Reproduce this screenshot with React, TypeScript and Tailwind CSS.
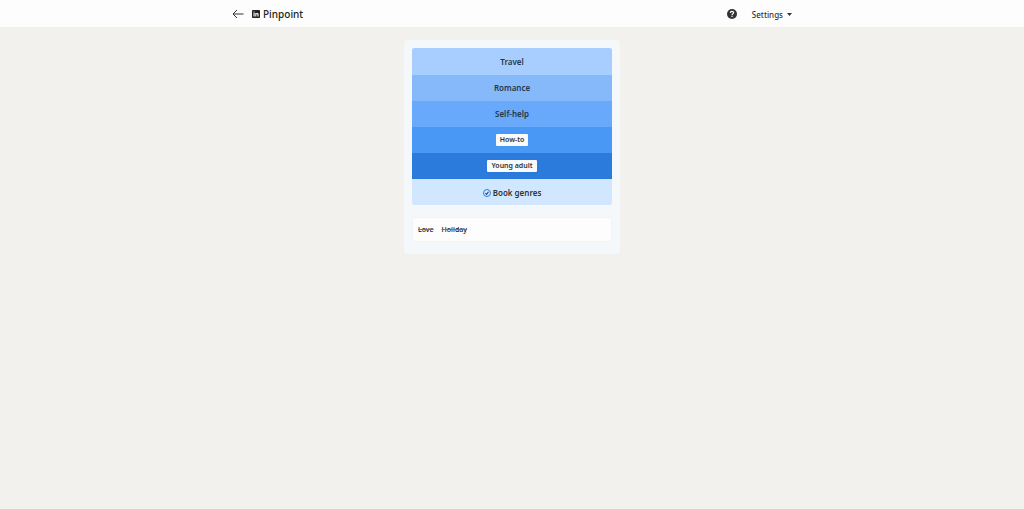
import React from "react";

const clues = [
  { text: "Travel", row: "h-[27px] bg-[#a8ceff]", boxed: false },
  { text: "Romance", row: "h-[26px] bg-[#86b9f9]", boxed: false },
  { text: "Self-help", row: "h-[26px] bg-[#69a9fb]", boxed: false },
  { text: "How-to", row: "h-[26px] bg-[#4a98f6]", boxed: true },
  { text: "Young adult", row: "h-[26px] bg-[#2b7bdd]", boxed: true },
];

const guesses = ["Love", "Holiday"];

const Header = () => {
  return (
    <header className="border-b border-[#f0f0ee] bg-[#fdfdfd]">
      <div className="mx-auto flex h-[27px] max-w-[560px] items-center justify-between">
        <div className="flex items-center gap-2">
          <button aria-label="Back" className="text-[#333]">
            <svg width="12" height="10" viewBox="0 0 12 10" fill="none" stroke="currentColor">
              <path d="M11.5 5H1M5 1 1 5l4 4" />
            </svg>
          </button>
          <h1 className="flex items-center gap-[3px] text-[10px] leading-4 font-medium text-[#222]">
            <svg width="8" height="8" viewBox="0 0 16 16" aria-hidden="true">
              <rect width="16" height="16" rx="1.5" fill="#222" />
              <path
                d="M3 6h2.2v7H3zM3 2.8h2.2V5H3zM6.6 6h2.1v1c.5-.8 1.2-1.2 2.1-1.2 1.6 0 2.4 1 2.4 3V13H11V9.3c0-1-.4-1.5-1.1-1.5s-1.2.5-1.2 1.5V13H6.6z"
                fill="#fff"
              />
            </svg>
            Pinpoint
          </h1>
        </div>
        <div className="flex items-center gap-[15px]">
          <button aria-label="Help">
            <svg width="10" height="10" viewBox="0 0 20 20">
              <circle cx="10" cy="10" r="10" fill="#333" />
              <path
                d="M6.8 7.8c0-2 1.3-3.2 3.2-3.2s3.2 1.1 3.2 2.8c0 2.3-3.1 2.4-3.1 4.7"
                fill="none"
                stroke="#fff"
                strokeWidth="2.5"
              />
              <circle cx="10" cy="14.7" r="1.5" fill="#fff" />
            </svg>
          </button>
          <button className="flex items-center gap-1 pt-[2px] text-[8px] leading-4 font-medium text-[#333]">
            Settings
            <svg width="5" height="3" viewBox="0 0 5 3" aria-hidden="true">
              <path d="M0 0h5L2.5 3z" fill="currentColor" />
            </svg>
          </button>
        </div>
      </div>
    </header>
  );
};

const App = () => {
  return (
    <div className="min-h-screen bg-[#f2f1ed] font-['Noto_Sans',sans-serif]">
      <Header />
      <main className="px-2 py-3">
        <section className="mx-auto max-w-[216px] rounded bg-[#f4f8fb] px-2 pt-2 pb-3">
          <ul className="overflow-hidden rounded-xs text-center text-[8px] leading-4 font-semibold text-[#26384d]">
            {clues.map((clue) => (
              <li
                key={clue.text}
                className={`flex items-center justify-center ${clue.row}`}
              >
                {clue.boxed ? (
                  <span className="rounded-[1px] bg-[#f8fafc] px-1 text-[7px] leading-3 text-[#333]">
                    {clue.text}
                  </span>
                ) : (
                  clue.text
                )}
              </li>
            ))}
            <li className="flex h-[26px] items-center justify-center gap-[2px] bg-[#d0e7ff] pt-[2px] text-[#333]">
              <svg width="8" height="8" viewBox="0 0 16 16" fill="none" aria-hidden="true">
                <circle cx="8" cy="8" r="7" stroke="#2f7fe0" strokeWidth="2" />
                <path d="M5 8.3 7.2 10.5 11 5.5" stroke="#234a7c" strokeWidth="2.4" />
              </svg>
              Book genres
            </li>
          </ul>
          <div className="mt-3 flex h-[25px] items-center gap-2 rounded-xs border border-[#f0f4f7] bg-[#fdfdfd] px-[5px] text-[7px] leading-3 font-medium text-[#111]">
            {guesses.map((guess) => (
              <s key={guess} className="decoration-[#777]">
                {guess}
              </s>
            ))}
          </div>
        </section>
      </main>
    </div>
  );
};

export default App;
